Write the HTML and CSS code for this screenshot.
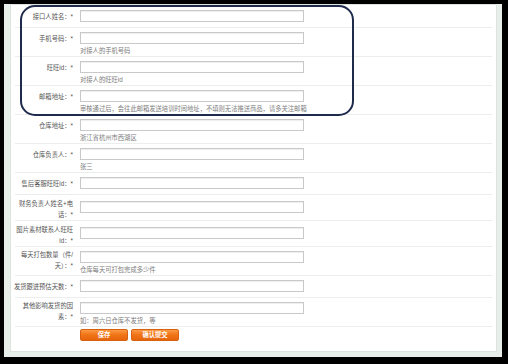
FILE: index.html
```html
<!DOCTYPE html>
<html lang="zh-CN">
<head>
    <meta charset="UTF-8">
    <meta name="viewport" content="width=device-width, initial-scale=1.0">
    <title>入驻信息</title>
    <link rel="stylesheet" href="styles.css">
</head>
<body>
    <div class="frame">
        <form class="panel">
            <div class="row">
                <label class="label">接口人姓名：*</label>
                <div class="field"><input type="text"></div>
            </div>
            <div class="row tipped">
                <label class="label">手机号码：*</label>
                <div class="field">
                    <input type="text">
                    <p class="tip">对接人的手机号码</p>
                </div>
            </div>
            <div class="row tipped">
                <label class="label">旺旺id：*</label>
                <div class="field">
                    <input type="text">
                    <p class="tip">对接人的旺旺id</p>
                </div>
            </div>
            <div class="row tipped">
                <label class="label">邮箱地址：*</label>
                <div class="field">
                    <input type="text">
                    <p class="tip">审核通过后，会往此邮箱发送培训时间地址，不填则无法推送商品，请多关注邮箱</p>
                </div>
            </div>
            <div class="row tipped">
                <label class="label">仓库地址：*</label>
                <div class="field">
                    <input type="text">
                    <p class="tip">浙江省杭州市西湖区</p>
                </div>
            </div>
            <div class="row tipped">
                <label class="label">仓库负责人：*</label>
                <div class="field">
                    <input type="text">
                    <p class="tip">张三</p>
                </div>
            </div>
            <div class="row">
                <label class="label">售后客服旺旺id：*</label>
                <div class="field"><input type="text"></div>
            </div>
            <div class="row high">
                <label class="label wrap">财务负责人姓名+电话：*</label>
                <div class="field"><input type="text"></div>
            </div>
            <div class="row high">
                <label class="label wrap">图片素材联系人旺旺id：*</label>
                <div class="field"><input type="text"></div>
            </div>
            <div class="row tipped">
                <label class="label wrap">每天打包数量（件/天）：*</label>
                <div class="field">
                    <input type="text">
                    <p class="tip">仓库每天可打包完成多少件</p>
                </div>
            </div>
            <div class="row">
                <label class="label nowrap">发货跟进预估天数：*</label>
                <div class="field"><input type="text"></div>
            </div>
            <div class="row tipped">
                <label class="label wrap">其他影响发货的因素：*</label>
                <div class="field">
                    <input type="text">
                    <p class="tip">如：周六日仓库不发货，等</p>
                </div>
            </div>
            <div class="actions">
                <button type="button" class="btn">保存</button>
                <button type="submit" class="btn">确认提交</button>
            </div>
        </form>
    </div>

    <!-- annotation drawn over the first four fields -->
    <div class="mark"></div>
</body>
</html>
```

FILE: styles.css
```css
* {
    margin: 0;
    padding: 0;
    box-sizing: border-box;
}
body {
    background: #000;
    width: 508px;
    height: 364px;
    overflow: hidden;
    position: relative;
    font-family: "Liberation Sans", "Noto Sans CJK SC", sans-serif;
    font-size: 6.3px;
    color: #555;
}
.frame {
    margin: 4px 6px 7px 4px;
    height: 353px;
    padding: 0 5px 5px 6px;
    background: #e8eee9;
    display: flex;
    flex-direction: column;
}
.panel {
    flex: 1;
    background: #fff;
    border: 1px solid #dde3de;
    padding: 1px 4px 0;
    display: flex;
    flex-direction: column;
}
.row {
    display: flex;
    align-items: flex-start;
    padding: 4px 0 5px;
    border-bottom: 1px solid #eceeec;
}
.row.tipped {
    padding-bottom: 1px;
}
.row.high {
    padding: 6px 0;
}
.label {
    width: 58px;
    flex-shrink: 0;
    text-align: right;
    line-height: 11px;
    padding-top: 1px;
}
.label.wrap {
    margin: -3px 0 -7px;
}
.row.high .label.wrap {
    margin: -4px 0 -6px;
}
.label.nowrap {
    white-space: nowrap;
    display: flex;
    justify-content: flex-end;
}
.field {
    margin-left: 7px;
}
.field input {
    display: block;
    width: 224px;
    height: 12px;
    border: 1px solid #c9c9c9;
    background: #fff;
    box-shadow: inset 0 1px 1px rgba(0, 0, 0, 0.07);
    outline: none;
}
.tip {
    line-height: 9px;
    margin-top: 2px;
    color: #7d7d7d;
    white-space: nowrap;
}
.actions {
    flex: 1;
    display: flex;
    align-items: flex-start;
    gap: 3px;
    padding: 2px 0 0 65px;
}
.btn {
    width: 48px;
    height: 12px;
    border: 1px solid #d9600e;
    border-radius: 2px;
    background: linear-gradient(#fb9a45, #f07316 50%, #e6650c);
    color: #fff;
    font-family: inherit;
    font-size: 6.3px;
    font-weight: bold;
    line-height: 10px;
    text-align: center;
    cursor: pointer;
}

/* navy annotation frame */
.mark {
    position: absolute;
    left: 20px;
    top: 5px;
    width: 334px;
    height: 111px;
    border: 2px solid #1e2b4c;
    border-radius: 15px;
}
```
